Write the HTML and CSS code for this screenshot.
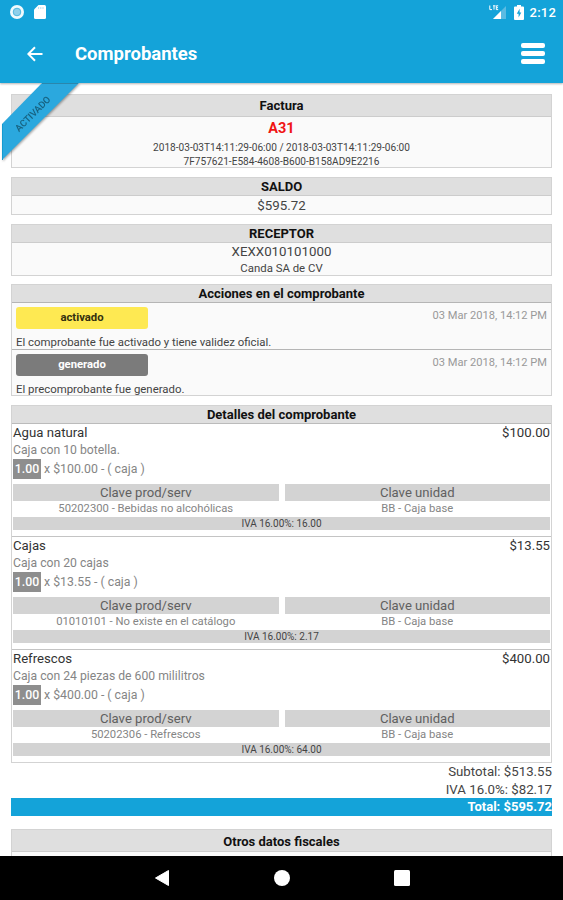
FILE: index.html
```html
<!DOCTYPE html>
<html lang="es">
<head>
    <meta charset="UTF-8">
    <meta name="viewport" content="width=device-width, initial-scale=1.0">
    <title>Comprobantes</title>
    <link rel="stylesheet" href="styles.css">
</head>
<body>
    <header class="top">
        <div class="status-bar">
            <svg class="icon-record" width="16" height="16" viewBox="0 0 16 16">
                <circle cx="8" cy="8" r="7" fill="#f0fafd"/>
                <circle cx="8" cy="8" r="3.8" fill="#8fd0eb" stroke="#4fb7df" stroke-width="1"/>
            </svg>
            <svg class="icon-sd" width="12" height="14" viewBox="0 0 12 14">
                <path d="M4.5 0H10.5Q12 0 12 1.5V12.5Q12 14 10.5 14H1.5Q0 14 0 12.5V4.5Z" fill="#fff"/>
                <path d="M4.6 2V4M6.8 2V4M9 2V4" stroke="#b5dff2" stroke-width="1"/>
            </svg>
            <div class="status-right">
                <svg class="icon-signal" width="18" height="15" viewBox="0 0 18 15">
                    <path d="M17 1V14H4Z" fill="#5bbbe2"/>
                    <path d="M12 6V14H4Z" fill="#fff"/>
                    <path d="M.8 .5V4.6H3M4 .8H6.5M5 .8V4.6M9.2 .8H7.3V4.6H9.2M7.3 2.7H9" fill="none" stroke="#fff" stroke-width="1"/>
                </svg>
                <svg class="icon-battery" width="10" height="15" viewBox="0 0 10 15">
                    <path d="M3 0H7V1.5H9Q10 1.5 10 2.5V14Q10 15 9 15H1Q0 15 0 14V2.5Q0 1.5 1 1.5H3Z" fill="#fff"/>
                    <path d="M5.6 3.8L2.8 8.8H4.6V12.6L7.3 7.6H5.6Z" fill="#14a3d9"/>
                </svg>
                <span class="clock">2:12</span>
            </div>
        </div>
        <div class="toolbar">
            <svg class="icon-back" width="16" height="16" viewBox="0 0 16 16">
                <path d="M15.5 8H2M8 1.2L1.3 8L8 14.8" fill="none" stroke="#fff" stroke-width="2"/>
            </svg>
            <h1>Comprobantes</h1>
            <div class="menu">
                <span></span>
                <span></span>
                <span></span>
            </div>
        </div>
    </header>

    <main>
        <svg class="ribbon" width="84" height="82" viewBox="0 0 84 82">
            <path d="M42 0H79L2 77V41Z" fill="#2ba8de"/>
            <path d="M42 .5H78" stroke="#2a86ac" stroke-width="1"/>
            <path d="M2.5 41V77" stroke="#159bd0" stroke-width="1"/>
            <text x="33" y="34" transform="rotate(-45 33 31)" text-anchor="middle">ACTIVADO</text>
        </svg>

        <section class="card factura">
            <h2>Factura</h2>
            <p class="folio">A31</p>
            <p class="small dates">2018-03-03T14:11:29-06:00 / 2018-03-03T14:11:29-06:00</p>
            <p class="small uuid">7F757621-E584-4608-B600-B158AD9E2216</p>
        </section>

        <section class="card saldo">
            <h2>SALDO</h2>
            <p class="amount">$595.72</p>
        </section>

        <section class="card receptor">
            <h2>RECEPTOR</h2>
            <p class="rfc">XEXX010101000</p>
            <p class="name">Canda SA de CV</p>
        </section>

        <section class="card acciones">
            <h2>Acciones en el comprobante</h2>
            <div class="accion">
                <div class="accion-row">
                    <span class="badge yellow">activado</span>
                    <span class="date">03 Mar 2018, 14:12 PM</span>
                </div>
                <p>El comprobante fue activado y tiene validez oficial.</p>
            </div>
            <div class="accion">
                <div class="accion-row">
                    <span class="badge gray">generado</span>
                    <span class="date">03 Mar 2018, 14:12 PM</span>
                </div>
                <p>El precomprobante fue generado.</p>
            </div>
        </section>

        <section class="card detalles">
            <h2>Detalles del comprobante</h2>
            <div class="item">
                <div class="item-title"><span>Agua natural</span><span>$100.00</span></div>
                <p class="desc">Caja con 10 botella.</p>
                <p class="qty"><b>1.00</b>x $100.00 - ( caja )</p>
                <div class="claves">
                    <div>
                        <h3>Clave prod/serv</h3>
                        <p>50202300 - Bebidas no alcohólicas</p>
                    </div>
                    <div>
                        <h3>Clave unidad</h3>
                        <p>BB - Caja base</p>
                    </div>
                </div>
                <p class="iva">IVA 16.00%: 16.00</p>
            </div>
            <div class="item">
                <div class="item-title"><span>Cajas</span><span>$13.55</span></div>
                <p class="desc">Caja con 20 cajas</p>
                <p class="qty"><b>1.00</b>x $13.55 - ( caja )</p>
                <div class="claves">
                    <div>
                        <h3>Clave prod/serv</h3>
                        <p>01010101 - No existe en el catálogo</p>
                    </div>
                    <div>
                        <h3>Clave unidad</h3>
                        <p>BB - Caja base</p>
                    </div>
                </div>
                <p class="iva">IVA 16.00%: 2.17</p>
            </div>
            <div class="item">
                <div class="item-title"><span>Refrescos</span><span>$400.00</span></div>
                <p class="desc">Caja con 24 piezas de 600 mililitros</p>
                <p class="qty"><b>1.00</b>x $400.00 - ( caja )</p>
                <div class="claves">
                    <div>
                        <h3>Clave prod/serv</h3>
                        <p>50202306 - Refrescos</p>
                    </div>
                    <div>
                        <h3>Clave unidad</h3>
                        <p>BB - Caja base</p>
                    </div>
                </div>
                <p class="iva">IVA 16.00%: 64.00</p>
            </div>
        </section>

        <div class="totales">
            <p>Subtotal: $513.55</p>
            <p>IVA 16.0%: $82.17</p>
            <p class="total">Total: $595.72</p>
        </div>

        <section class="card otros">
            <h2>Otros datos fiscales</h2>
        </section>
    </main>

    <nav class="android-nav">
        <svg width="16" height="18" viewBox="0 0 16 18"><path d="M14.5 1.5V16.5L1.5 9Z" fill="#fff" stroke="#fff" stroke-linejoin="round"/></svg>
        <svg width="16" height="16" viewBox="0 0 16 16"><circle cx="8" cy="8" r="8" fill="#fff"/></svg>
        <svg width="16" height="16" viewBox="0 0 16 16"><rect width="16" height="16" rx="1.5" fill="#fff"/></svg>
    </nav>
</body>
</html>
```
FILE: styles.css
```css
* {
    box-sizing: border-box;
}

body {
    margin: 0;
    height: 900px;
    display: flex;
    flex-direction: column;
    overflow: hidden;
    font-family: Roboto, sans-serif;
    font-size: 13px;
    color: #444;
    background-color: #fff;
}

h1, h2, h3, p {
    margin: 0;
}

.top {
    flex: none;
    height: 83px;
    background-color: #14a3d9;
    box-shadow: 0 1px 2px rgba(0, 0, 0, 0.3);
    color: #fff;
}

.status-bar {
    display: flex;
    align-items: center;
    height: 24px;
    padding: 0 7px 0 9px;
}

.icon-sd {
    margin-left: 9px;
}

.status-right {
    display: flex;
    align-items: center;
    margin-left: auto;
}

.icon-battery {
    margin: 0 6px 0 7px;
}

.clock {
    font-size: 13px;
    font-weight: 500;
    letter-spacing: 0.2px;
}

.toolbar {
    display: flex;
    align-items: center;
    height: 59px;
    padding: 0 18px 0 27px;
}

h1 {
    margin-left: 32px;
    font-size: 18.5px;
    font-weight: 700;
}

.menu {
    display: flex;
    flex-direction: column;
    gap: 3px;
    width: 24px;
    margin-left: auto;
}

.menu span {
    height: 5px;
    border-radius: 2px;
    background-color: #fff;
}

main {
    position: relative;
    flex: 1;
    min-height: 0;
    overflow: hidden;
    padding: 11px 11px 0;
}

/* corner ribbon, lies over the first card */
.ribbon {
    position: absolute;
    top: 0;
    left: 0;
    z-index: 1;
    filter: drop-shadow(1px 1px 1px rgba(0, 0, 0, 0.35));
}

.ribbon text {
    font-size: 9.5px;
    font-weight: 500;
    fill: #17617f;
}

.card {
    margin-bottom: 9px;
    border: 1px solid #d3d3d3;
    background-color: #fafafa;
    text-align: center;
}

.card h2 {
    height: 18px;
    line-height: 18px;
    border-bottom: 1px solid #ccc;
    background-color: #dfdfdf;
    color: #111;
    font-size: 13px;
    font-weight: 700;
}

.factura {
    height: 74px;
}

.factura h2 {
    height: 22px;
    line-height: 22px;
}

.card .folio {
    line-height: 24px;
    font-size: 14.5px;
    font-weight: 700;
    color: #f01414;
}

.small {
    line-height: 14px;
    font-size: 10.1px;
}

.saldo {
    height: 38px;
}

.amount {
    line-height: 19px;
    font-size: 13.3px;
}

.receptor {
    height: 52px;
    margin-bottom: 8px;
}

.rfc {
    line-height: 17px;
    font-size: 13.3px;
}

.name {
    line-height: 16px;
    font-size: 11.4px;
}

.acciones {
    height: 112px;
}

.acciones h2 {
    border-color: #b5b5b5;
}

.accion {
    height: 46px;
    padding: 4px 4px 0;
    text-align: left;
}

.accion + .accion {
    border-top: 1px solid #b5b5b5;
}

.accion-row {
    display: flex;
    justify-content: space-between;
    align-items: flex-start;
}

.badge {
    width: 132px;
    height: 22px;
    line-height: 21px;
    border-radius: 3px;
    text-align: center;
    font-size: 11.3px;
    font-weight: 700;
}

.yellow {
    background-color: #fee952;
    color: #33300f;
}

.gray {
    background-color: #7b7b7b;
    color: #fff;
}

.date {
    line-height: 17px;
    font-size: 11.1px;
    color: #999;
}

.accion p {
    margin-top: 6px;
    line-height: 14px;
    font-size: 11.4px;
}

.detalles {
    margin-bottom: 0;
    background-color: #fff;
}

.detalles h2 {
    border-color: #bbb;
}

.item {
    height: 112px;
    padding: 0 1px;
    text-align: left;
}

.item + .item {
    height: 113px;
    border-top: 1px solid #c4c4c4;
}

.item-title {
    display: flex;
    justify-content: space-between;
    line-height: 18px;
    font-size: 13.2px;
    color: #333;
}

.desc {
    line-height: 17px;
    font-size: 12.2px;
    color: #858585;
}

.qty {
    line-height: 20px;
    font-size: 12.3px;
    color: #858585;
}

.qty b {
    display: inline-block;
    width: 28px;
    margin-right: 3px;
    background-color: #8e8e8e;
    color: #fff;
    text-align: center;
    font-weight: 500;
}

.claves {
    display: grid;
    grid-template-columns: 1fr 1fr;
    gap: 6px;
    margin-top: 5px;
    text-align: center;
}

.claves h3 {
    line-height: 17px;
    background-color: #d3d3d3;
    font-size: 13.1px;
    font-weight: 400;
    color: #606060;
}

.claves p {
    line-height: 16px;
    font-size: 11.25px;
    color: #858585;
}

.iva {
    line-height: 13px;
    background-color: #d3d3d3;
    text-align: center;
    font-size: 10px;
}

.totales {
    margin-bottom: 13px;
    text-align: right;
}

.totales p {
    line-height: 17.5px;
    font-size: 13.25px;
}

.totales .total {
    height: 18px;
    background-color: #14a3d9;
    color: #fff;
    font-size: 13px;
    font-weight: 700;
}

.otros {
    height: 60px;
}

.otros h2 {
    height: 22px;
    line-height: 23px;
}

.android-nav {
    display: flex;
    flex: none;
    justify-content: center;
    align-items: center;
    gap: 104px;
    height: 44px;
    background-color: #000;
}
```
